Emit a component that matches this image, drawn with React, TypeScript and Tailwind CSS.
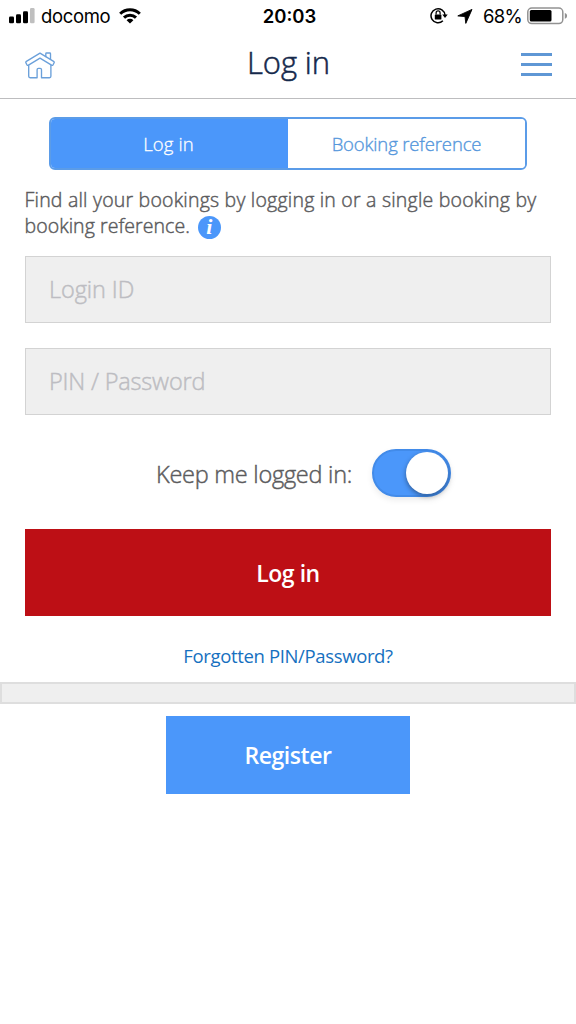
function SignalIcon() {
  return (
    <svg className="ml-[9px] h-4 w-[26px] shrink-0" viewBox="0 0 26 16">
      <rect x="0" y="8.5" width="5" height="6.7" rx="1.3" />
      <rect x="7" y="6.3" width="5" height="8.9" rx="1.3" />
      <rect x="14" y="3.2" width="5" height="12" rx="1.3" />
      <rect x="21" y="0" width="4.6" height="15.2" rx="1.3" fill="#bfbfbf" />
    </svg>
  );
}

function WifiIcon() {
  return (
    <svg className="ml-[9px] h-4 w-[22px] shrink-0" viewBox="0 0 22 16" fill="none" stroke="#000" strokeWidth="3">
      <path d="M1.2 5.8C6.6.4 15.4.4 20.8 5.8" />
      <path d="M5 9.6c3.3-3.3 8.7-3.3 12 0" />
      <path d="M11 15.6l-3.4-3.4a4.8 4.8 0 0 1 6.8 0z" fill="#000" stroke="none" />
    </svg>
  );
}

function RotationLockIcon() {
  return (
    <svg className="h-[17px] w-[18px] shrink-0 -translate-y-px" viewBox="0 0 18 17" fill="none" stroke="#000" strokeWidth="1.5">
      <path d="M12.9 13.8A7 7 0 1 1 15 8.2" />
      <path d="M12.3 7.6h5.4L15 11z" fill="#000" stroke="none" />
      <rect x="4.8" y="7.4" width="6.6" height="5.2" rx=".7" fill="#000" stroke="none" />
      <path d="M6.1 7.6V5.9a2 2 0 0 1 4 0v1.7" strokeWidth="1.2" />
    </svg>
  );
}

function BatteryIcon() {
  return (
    <svg className="ml-[5px] h-[18px] w-[41px] shrink-0" viewBox="0 0 41 18">
      <rect x=".8" y="1" width="35" height="15.6" rx="4" fill="none" stroke="#929292" strokeWidth="1.5" />
      <rect x="2.8" y="3" width="21.7" height="11.6" rx="1.5" />
      <path d="M37.8 6c3 .7 3 5 0 5.8z" fill="#929292" />
    </svg>
  );
}

function HomeIcon() {
  return (
    <svg
      className="h-[27px] w-[30px]"
      viewBox="0 0 30 27"
      fill="none"
      stroke="#6ba0da"
      strokeWidth="1.35"
      strokeLinejoin="round"
      strokeLinecap="round"
    >
      <path d="M15 1.1 1.4 9.4c-.6.4-.8 1-.4 1.6l1 1.8c.4.6.9.7 1.5.3L15 6.2l11.5 6.9c.6.4 1.1.3 1.5-.3l1-1.8c.4-.6.2-1.2-.4-1.6z" />
      <path d="M20.8 4.5V1.7c0-.5.2-.7.7-.7h3.3c.5 0 .7.2.7.7v5.6" />
      <path d="M3.7 13.4v10.9c0 .9.5 1.4 1.4 1.4h7v-8c0-.9.4-1.3 1.3-1.3h1.8c.9 0 1.3.4 1.3 1.3v8h8c.9 0 1.4-.5 1.4-1.4V13.4" />
    </svg>
  );
}

function StatusBar() {
  return (
    <div className="grid h-8 grid-cols-[1fr_auto_1fr] items-center font-['Inter','Liberation_Sans',sans-serif] text-black">
      <div className="flex items-center">
        <SignalIcon />
        <span className="ml-[6px] text-[18.5px] leading-8 tracking-[-0.35px]">docomo</span>
        <WifiIcon />
      </div>
      <span className="translate-x-[1.5px] text-[18.5px] leading-8 font-semibold">20:03</span>
      <div className="flex items-center justify-end pr-[8px]">
        <RotationLockIcon />
        <svg className="ml-[9px] h-[15px] w-[16px] shrink-0" viewBox="0 0 16 15">
          <path d="M15 .4 8.8 14.4 8 7.6.8 6.9z" stroke="#000" strokeWidth=".9" strokeLinejoin="round" />
        </svg>
        <span className="ml-[10px] text-[18.5px] leading-8 tracking-[-0.7px]">68%</span>
        <BatteryIcon />
      </div>
    </div>
  );
}

export default function App() {
  return (
    <div className="flex min-h-[1024px] flex-col bg-white font-['Open_Sans','Noto_Sans',sans-serif] text-[#5b5b5d]">
      <StatusBar />
      <header className="grid h-[67px] grid-cols-[1fr_auto_1fr] items-center border-b border-[#bdbdbf] pr-[24px] pl-[25px]">
        <button aria-label="Home" className="justify-self-start">
          <HomeIcon />
        </button>
        <h1 className="-translate-y-[3px] text-[31px] leading-10 font-light tracking-[-0.1px] text-[#15294b] [-webkit-text-stroke:0.5px_#15294b]">
          Log in
        </h1>
        <button aria-label="Menu" className="mb-[2px] flex flex-col gap-[7px] justify-self-end">
          <span className="h-[3px] w-[31px] bg-[#5f97d5]" />
          <span className="h-[3px] w-[31px] bg-[#5f97d5]" />
          <span className="h-[3px] w-[31px] bg-[#5f97d5]" />
        </button>
      </header>

      <main className="flex flex-col">
        <div className="mx-[49px] mt-[18px] grid h-[53px] grid-cols-2 overflow-hidden rounded-[6px] border-2 border-[#5b9ce8] text-[18.5px] font-light">
          <button className="bg-[#4b97fa] pr-[2px] tracking-[0.1px] text-white [-webkit-text-stroke:0.3px_#fff]">Log in</button>
          <button className="bg-white tracking-[-0.14px] text-[#5597dc] [-webkit-text-stroke:0.35px_#5597dc]">
            Booking reference
          </button>
        </div>

        <p className="mt-[17px] ml-[24.5px] text-[19.5px] leading-[26px] font-light tracking-[0.21px] whitespace-nowrap [-webkit-text-stroke:0.45px_#5b5b5d]">
          Find all your bookings by logging in or a single booking by
          <br />
          <span className="flex items-center tracking-[0.06px]">
            booking reference.
            <span className="ml-[8px] flex h-[23px] w-[23px] translate-y-px items-center justify-center rounded-full bg-[#4b97fa] font-['Liberation_Serif',serif] text-[22px] leading-none font-bold text-white italic [-webkit-text-stroke:0]">
              i
            </span>
          </span>
        </p>

        <div className="mx-[25px] mt-[17px] flex flex-col gap-[25px]">
          <input
            className="h-[67px] border border-[#d3d3d3] bg-[#efefef] px-[23px] pb-px text-[23.5px] font-light tracking-[-0.08px] [-webkit-text-stroke:0.45px_#bdbdc2] placeholder:text-[#bdbdc2] placeholder:opacity-100"
            placeholder="Login ID"
          />
          <input
            type="password"
            className="h-[67px] border border-[#d3d3d3] bg-[#efefef] px-[23px] pb-px text-[23.5px] font-light tracking-[-0.18px] [-webkit-text-stroke:0.45px_#bdbdc2] placeholder:text-[#bdbdc2] placeholder:opacity-100"
            placeholder="PIN / Password"
          />
        </div>

        <div className="mt-[34px] ml-[156px] flex h-12 items-center">
          <span className="w-[216px] translate-y-[2px] text-[23.5px] font-light tracking-[-0.25px] whitespace-nowrap [-webkit-text-stroke:0.45px_#5b5b5d]">
            Keep me logged in:
          </span>
          <span
            role="switch"
            aria-checked="true"
            className="flex h-12 w-[79px] items-center justify-end rounded-full border-2 border-[#428be9] bg-[#4b97fa] pr-px shadow-[0_3px_6px_rgba(0,0,0,0.08)]"
          >
            <span className="h-[42px] w-[42px] rounded-full bg-white shadow-[0_2px_5px_rgba(0,0,0,0.4)]" />
          </span>
        </div>

        <button className="mx-[25px] mt-[32px] h-[87px] bg-[#bd0f15] pt-[2px] text-[23px] font-semibold tracking-[-0.45px] text-white">
          Log in
        </button>
        <a className="mt-[27px] self-center text-[18.5px] leading-[26px] tracking-[-0.35px] text-[#1670c0]">
          Forgotten PIN/Password?
        </a>
        <div className="mt-[13px] h-[22px] border-2 border-[#dedede] bg-[#efefef]" />
        <button className="mt-[12px] h-[78px] w-[244px] self-center bg-[#4b97fa] text-[23px] font-semibold tracking-[-0.45px] text-white">
          Register
        </button>
      </main>
    </div>
  );
}
